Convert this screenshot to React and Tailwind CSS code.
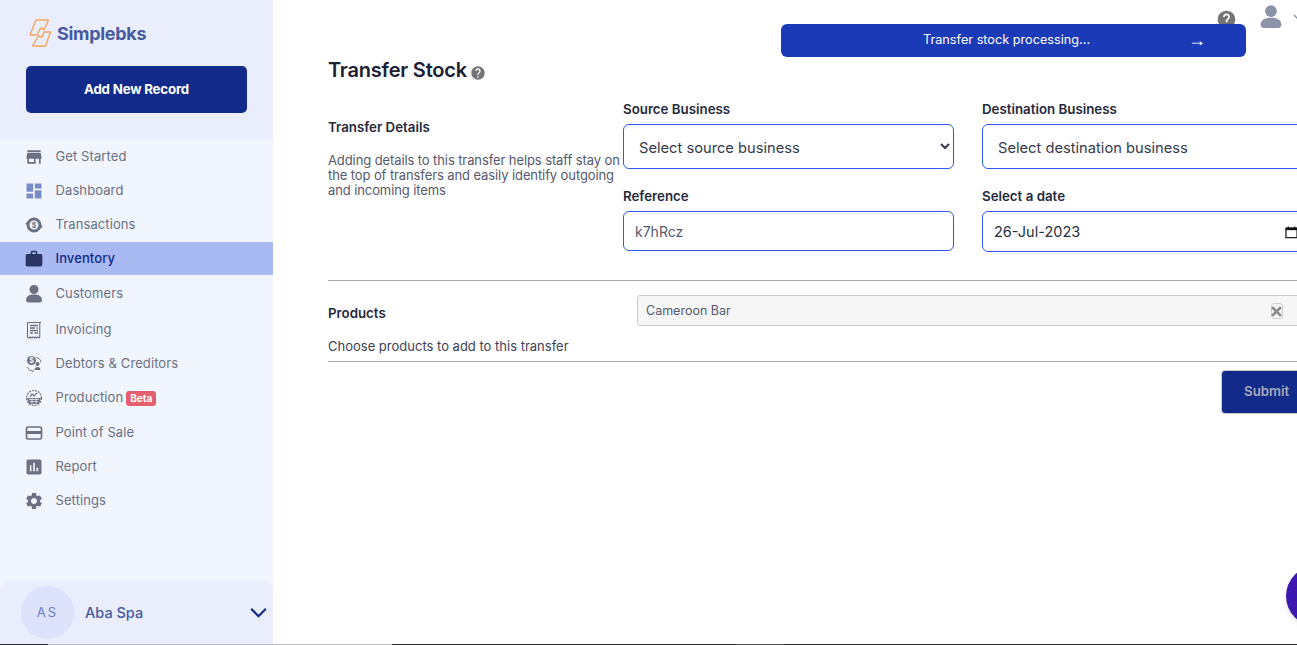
import { MdStore, MdDashboard, MdWork, MdAssessment, MdSettings, MdHelp } from 'react-icons/md'

const FONT = { fontFamily: 'Inter' }

function Bust({ className }) {
  return (
    <svg viewBox="0 0 20 20" className={className} fill="currentColor">
      <circle cx="10" cy="5.5" r="4.5" />
      <path d="M2 16c0-3.6 3-5.5 8-5.500s8 1.900 8 5.500c0 1.500-1 2.500-2.500 2.500h-11C3 18.500 2 17.500 2 16z" />
    </svg>
  )
}

function Transactions({ className }) {
  return (
    <svg viewBox="0 0 20 20" className={className} fill="none">
      <circle cx="10" cy="10" r="6" stroke="currentColor" strokeWidth="3" />
      <path d="M1 9l3-3 1 4zM19 11l-3 3-1-4z" fill="currentColor" />
      <text x="10" y="12.500" fontSize="7" fontWeight="700" fill="currentColor" textAnchor="middle" fontFamily="Inter">$</text>
    </svg>
  )
}

function Invoice({ className }) {
  return (
    <svg viewBox="0 0 20 20" className={className} fill="none" stroke="currentColor">
      <path d="M3 2.500h14M3.500 2.500v14.500l1.500 1 1.250-1 1.250 1 1.250-1 1.250 1 1.250-1 1.250 1 1.250-1 1.500 1 .5-1V2.500" strokeWidth="1.100" />
      <path d="M6 5.500h8M6 8h5M12.500 8H14M6 10.500h8M6 13h3M10.500 13H14" strokeWidth="1.500" />
    </svg>
  )
}

function Debtors({ className }) {
  return (
    <svg viewBox="0 0 20 20" className={className} fill="none">
      <circle cx="7.500" cy="6.500" r="4.500" fill="currentColor" />
      <text x="7.500" y="9" fontSize="7" fontWeight="700" fill="#f1f5fe" textAnchor="middle" fontFamily="Inter">$</text>
      <circle cx="13.500" cy="10" r="2" fill="currentColor" />
      <path d="M10.500 16c0-2 1.500-3 3-3s3 1 3 3z" fill="currentColor" />
      <path d="M12.500 3.500c2.500.5 4.500 2.500 4.500 5M3.500 13c.8 3 3.500 4.500 6.500 4" stroke="currentColor" strokeWidth="1" />
    </svg>
  )
}

function Production({ className }) {
  return (
    <svg viewBox="0 0 20 20" className={className} fill="none" stroke="currentColor">
      <circle cx="10" cy="10" r="7.500" strokeWidth="1.200" strokeDasharray="2 1" />
      <path d="M3 10h14l-2 6H5z" fill="currentColor" stroke="none" />
      <path d="M5 11.500h10M6 13.500h8M8 10v6M12 10v6" stroke="#f1f5fe" strokeWidth=".7" />
      <path d="M6 9l2-3 2 2 3-3" strokeWidth="1.200" />
    </svg>
  )
}

function Card({ className }) {
  return (
    <svg viewBox="0 0 20 20" className={className} fill="none" stroke="currentColor">
      <rect x="2.500" y="4" width="15" height="12" rx="1.500" strokeWidth="1.700" />
      <path d="M2.500 9.500h15" strokeWidth="3" />
    </svg>
  )
}

const NAV = [
  { label: 'Get Started', Icon: MdStore, h: 'h-[34px]' },
  { label: 'Dashboard', Icon: MdDashboard, h: 'h-[34px]', iconClass: 'text-[#7a8cc6]' },
  { label: 'Transactions', Icon: Transactions, h: 'h-[34px]' },
  { label: 'Inventory', Icon: MdWork, h: 'h-[33px]', active: true },
  { label: 'Customers', Icon: Bust, h: 'h-[37px]' },
  { label: 'Invoicing', Icon: Invoice, h: 'h-[35px]' },
  { label: 'Debtors & Creditors', Icon: Debtors, h: 'h-[34px]' },
  { label: 'Production', Icon: Production, h: 'h-[34px]', beta: true },
  { label: 'Point of Sale', Icon: Card, h: 'h-[35px]' },
  { label: 'Report', Icon: MdAssessment, h: 'h-[34px]' },
  { label: 'Settings', Icon: MdSettings, h: 'h-[34px]' },
]

function Logo() {
  return (
    <svg viewBox="0 0 23 28" className="w-[23px] h-[28px]" fill="none" stroke="#f5a55c" strokeWidth="1.400" strokeLinejoin="round">
      <path d="M7 1H19.500L15 10.500 11.500 9 8 16H1z" />
      <path d="M21.500 13H15L13 18 9.500 17 3.500 27H16.500z" />
    </svg>
  )
}

function Sidebar() {
  return (
    <aside className="w-[273px] shrink-0 h-full bg-[#f1f5fe] flex flex-col">
      <div className="h-[140px] bg-[#e9edfc] px-[26px] pt-[19px]">
        <div className="flex items-center gap-[5px] pl-[3px] h-[28px]">
          <Logo />
          <span className="text-[18px] font-bold text-[#47599f] tracking-[-0.3px]">Simplebks</span>
        </div>
        <button className="mt-[19px] w-[221px] h-[47px] rounded-[5px] bg-[#122b8a] text-white text-[13.300px] font-bold tracking-[-0.2px]">
          Add New Record
        </button>
      </div>
      <nav className="flex flex-col">
        {NAV.map(({ label, Icon, h, active, beta, iconClass }) => (
          <div key={label} className={`flex items-center pl-[24px] ${h} ${active ? 'bg-[#a9b9f2] text-[#122b8a] font-medium' : 'text-[#6b7083]'}`}>
            <Icon className={`w-5 h-5 shrink-0 ${active ? 'text-[#2a3563]' : iconClass || 'text-[#6b7083]'}`} />
            <span className="ml-[11.500px] text-[13px] tracking-[0.1px]">{label}</span>
            {beta && <span className="ml-[3px] px-[4px] h-[15px] leading-[15px] rounded-[3px] bg-[#e4606f] text-white text-[10px] font-bold">Beta</span>}
          </div>
        ))}
      </nav>
      <div className="mt-auto h-[65px] rounded-t-[10px] bg-[#e9edfc] flex items-center pl-[21px] pr-[5px]">
        <div className="w-[53px] h-[53px] rounded-full bg-[#dde3fb] flex items-center justify-center text-[13px] text-[#6c7dbd] tracking-[2px]">AS</div>
        <span className="ml-[11px] text-[14.500px] font-medium text-[#47599f]">Aba Spa</span>
        <svg viewBox="0 0 20 12" className="ml-auto w-[19px] h-[11px]" fill="none" stroke="#122b8a" strokeWidth="2.400"><path d="M2 2l8 8 8-8" /></svg>
      </div>
    </aside>
  )
}

function Field({ label, children }) {
  return (
    <div className="flex flex-col w-[331px] shrink-0">
      <label className="text-[13.300px] font-semibold text-[#262a3d] leading-[20px] mb-[5px]">{label}</label>
      {children}
    </div>
  )
}

function Main() {
  return (
    <main className="relative flex-1 min-w-0 h-full overflow-hidden bg-white pl-[55px]">
      <div className="absolute left-[508px] top-[24px] w-[465px] h-[33px] z-10 rounded-[6px] bg-[#1a3ab8] text-white text-[12.700px] flex items-center pb-[2px]">
        <span className="ml-[142px]">Transfer stock processing...</span>
        <span className="ml-[98px] text-[18px] leading-none" style={{ fontFamily: 'Liberation Sans' }}>→</span>
      </div>

      <div className="w-[1100px]">
        <div className="h-[35px] flex items-start">
          <MdHelp className="ml-[888px] mt-[9px] w-[21px] h-[21px] text-[#747474]" />
          <Bust className="ml-[21px] mt-[4px] w-[26px] h-[26px] text-[#8b93a7]" />
          <svg viewBox="0 0 10 6" className="ml-[9px] mt-[14px] w-[10px] h-[6px]" fill="none" stroke="#8b93a7" strokeWidth="1.400"><path d="M1 1l4 4 4-4" /></svg>
        </div>
        <h1 className="mt-[21px] h-[28px] flex items-center text-[20px] font-semibold text-[#1c2033] tracking-[-0.2px]">
          Transfer Stock
          <MdHelp className="ml-[3px] mt-[5px] w-[16px] h-[16px] text-[#747474]" />
        </h1>

        <div className="mt-[12px] flex h-[185px] border-b border-[#a8a8a8] pt-[3px]">
          <div className="w-[295px] shrink-0 pt-[18px]">
            <h2 className="text-[13.300px] font-semibold leading-[20px] text-[#262a3d]">Transfer Details</h2>
            <p className="mt-[16px] text-[13px] leading-[15px] text-[#55596c] w-[300px] tracking-[-0.1px]">
              Adding details to this transfer helps staff stay on the top of transfers and easily identify outgoing and incoming items
            </p>
          </div>
          <div className="flex flex-col gap-[17px]">
            <div className="flex gap-[28px]">
              <Field label="Source Business">
                <select className="h-[45px] w-full rounded-[6px] border border-[#2d58f0] bg-white pl-[11px] pr-[4px] pt-[2px] text-[14.700px] text-[#363a4c]" style={FONT}>
                  <option>Select source business</option>
                </select>
              </Field>
              <Field label="Destination Business">
                <select className="h-[45px] w-full rounded-[6px] border border-[#2d58f0] bg-white pl-[11px] pr-[4px] pt-[2px] text-[14.700px] text-[#363a4c]" style={FONT}>
                  <option>Select destination business</option>
                </select>
              </Field>
            </div>
            <div className="flex gap-[28px]">
              <Field label="Reference">
                <input readOnly value="k7hRcz" className="h-[40px] w-full rounded-[6px] border border-[#2d58f0] px-[11px] text-[14px] text-[#55596c] outline-none" />
              </Field>
              <Field label="Select a date">
                <div className="h-[41px] w-full rounded-[6px] border border-[#2d58f0] pl-[11px] pr-[14px] flex items-center justify-between text-[14.500px] text-[#2b2f40]">
                  26-Jul-2023
                  <svg viewBox="0 0 14 14" className="w-[13px] h-[14px]" fill="none"><path d="M1 3.500h12v9.500H1z" stroke="#222" strokeWidth="1.400" /><path d="M1 2h12v3H1z" fill="#111" /><path d="M3.500 1v2M10.500 1v2" stroke="#111" strokeWidth="1.200" /></svg>
                </div>
              </Field>
            </div>
          </div>
        </div>

        <div className="h-[81px] w-[969px] border-b border-[#a8a8a8]">
          <div className="flex items-start pt-[14px]">
            <div className="w-[309px] shrink-0 pt-[8px] text-[13.300px] font-semibold leading-[20px] text-[#262a3d]">Products</div>
            <div className="w-[700px] shrink-0 h-[31px] rounded-[3px] border border-[#cccccc] bg-[#f6f6f6] pl-[8px] pt-[1px] flex items-center text-[12.500px] text-[#55596c]">
              Cameroon Bar
              <span className="ml-[540px] w-[12px] h-[16px] rounded-[3px] border border-[#cfcfcf] flex items-center justify-center text-[#8a8a8a]">
                <svg viewBox="0 0 10 10" className="w-[11px] h-[11px] shrink-0" stroke="currentColor" strokeWidth="2.500"><path d="M1 1l8 8M9 1l-8 8" /></svg>
              </span>
            </div>
          </div>
          <p className="mt-[10px] text-[13px] leading-[20px] text-[#3d4154]">Choose products to add to this transfer</p>
        </div>

        <button className="block mt-[8px] ml-[893px] w-[120px] h-[44px] rounded-[4px] border border-[#c9c9c9] bg-[#122b8a] text-[#a5a9b8] text-[13.300px] font-semibold text-left pl-[22px]">
          Submit
        </button>
      </div>

      <div className="absolute left-[1013px] top-[566px] w-[60px] h-[60px] rounded-full bg-[#3d17b0] shadow-md" />
    </main>
  )
}

export default function App() {
  return (
    <div className="relative flex h-[645px] w-[1297px] overflow-hidden" style={FONT}>
      <Sidebar />
      <Main />
      {/* 1px strip along the bottom edge */}
      <div className="absolute left-0 right-0 bottom-0 h-px z-20 flex">
        <div className="w-[48px] bg-[#2a2a2a]" />
        <div className="w-[344px] bg-[#c0c0c0]" />
        <div className="w-[344px] bg-[#2a2a2a]" />
        <div className="w-[48px] bg-[#555555]" />
        <div className="flex-1 bg-[#2a2a2a]" />
      </div>
    </div>
  )
}
